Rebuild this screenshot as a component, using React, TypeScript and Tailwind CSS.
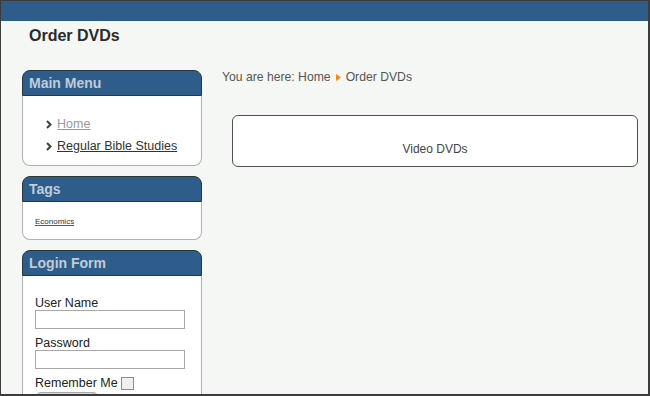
import React from 'react';

function Chevron() {
  return (
    <svg width="6" height="9" viewBox="0 0 6 9" className="mr-[5px] shrink-0">
      <polyline points="1,1 4.5,4.5 1,8" fill="none" stroke="#354535" strokeWidth="2" />
    </svg>
  );
}

function ModuleHeader({ title }: { title: string }) {
  return (
    <div className="h-[26px] rounded-t-[8px] border border-[#2a3838] bg-[#2e5d8c] px-[6px] flex items-center">
      <span className="text-[14px] font-bold text-[#c2ccd6] leading-none">{title}</span>
    </div>
  );
}

export default function App() {
  return (
    <div className="w-[650px] h-[396px] overflow-hidden border-t border-l border-r-2 border-b-2 border-[#3c3c3c] bg-[#f5f7f4] font-['Liberation_Sans',Arial,sans-serif] text-[#333]">
      <div className="h-[20px] bg-[#2e5d8c]" />

      <h1 className="pl-[28px] pt-[5px] text-[16px] font-bold text-[#2b2b2b] leading-[20px]">Order DVDs</h1>

      <div className="flex mt-[24px] pl-[21px]">
        {/* Sidebar */}
        <div className="w-[180px] shrink-0 flex flex-col gap-[10px]">
          <div>
            <ModuleHeader title="Main Menu" />
            <div className="h-[70px] bg-white border-x border-b border-[#b0b0b0] rounded-b-[8px] pl-[23px] pt-[21px] text-[12.5px]">
              <div className="flex items-center h-[15px]">
                <Chevron />
                <a className="underline text-[#999]">Home</a>
              </div>
              <div className="flex items-center h-[15px] mt-[7px]">
                <Chevron />
                <a className="underline text-[#333]">Regular Bible Studies</a>
              </div>
            </div>
          </div>

          <div>
            <ModuleHeader title="Tags" />
            <div className="h-[38px] bg-white border-x border-b border-[#b0b0b0] rounded-b-[8px] pl-[12px] pt-[16px]">
              <a className="underline text-[8px] leading-none text-[#333] decoration-[#6b5a2a] block">Economics</a>
            </div>
          </div>

          <div>
            <ModuleHeader title="Login Form" />
            <div className="h-[140px] bg-white border-x border-[#b0b0b0] pl-[12px] pt-[20px] text-[12.5px] text-[#222]">
              <div className="leading-[14px]">User Name</div>
              <input className="block w-[150px] h-[19px] border border-[#a8a8a8] bg-white" />
              <div className="leading-[14px] mt-[7px]">Password</div>
              <input className="block w-[150px] h-[19px] border border-[#a8a8a8] bg-white" />
              <div className="flex items-center mt-[7px] leading-[14px]">
                <span>Remember Me</span>
                <span className="ml-[3px] w-[13px] h-[13px] border border-[#8c8c8c] bg-[#f0f0f0]" />
              </div>
              <div className="mt-[2px] w-[64px] h-[12px] rounded-t-[6px] border border-[#aaa] bg-[#d8d8d8]" />
            </div>
          </div>
        </div>

        {/* Main */}
        <div className="ml-[20px] flex-1">
          <div className="text-[12.2px] text-[#555] leading-[14px] flex items-center">
            <span>You are here: Home</span>
            <svg width="5" height="7" viewBox="0 0 5 7" className="mx-[5px]">
              <polygon points="0,0 5,3.5 0,7" fill="#f08a1c" />
            </svg>
            <span>Order DVDs</span>
          </div>
          <div className="mt-[31px] ml-[10px] mr-[10px] h-[52px] rounded-[6px] border border-[#505050] bg-white flex items-end justify-center pb-[10px]">
            <span className="text-[12px] text-[#444] leading-[14px]">Video DVDs</span>
          </div>
        </div>
      </div>
    </div>
  );
}
